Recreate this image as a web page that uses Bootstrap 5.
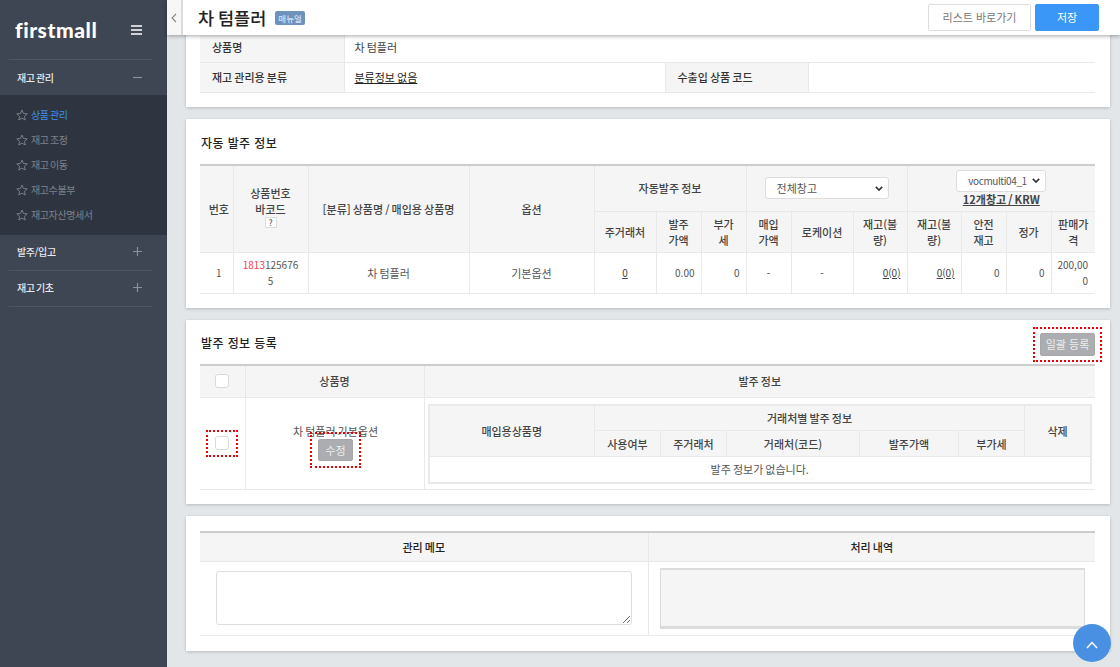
<!doctype html>
<html lang="ko">
<head>
<meta charset="utf-8">
<title>차 텀플러</title>
<link href="https://cdn.jsdelivr.net/npm/bootstrap@5.3.0/dist/css/bootstrap.min.css" rel="stylesheet">
<style>
html,body{height:100%;overflow:hidden}
body{font-family:"Noto Sans CJK KR","Noto Sans",sans-serif;font-size:11px;color:#555;background:#e3e6e9;line-height:16px;word-spacing:-1px}
.shell{height:667px}
.side{width:167px;flex:none;background:#3e4553;color:#e6e8ec;font-size:10px;letter-spacing:-.4px}
.logo-row{height:60px;margin:0 15px 0 9px;padding:0 10px 0 6px;border-bottom:1px solid #4c5361}
.logo-txt{font-family:Lato,"Open Sans",sans-serif;font-weight:900;font-size:21px;color:#fff;letter-spacing:.55px;word-spacing:0}
.menu-h{height:36px;margin:0 15px 0 9px;padding:0 10px 2px 8px;font-weight:500;color:#e8eaee;border-bottom:1px solid #4c5361}
.menu-first{height:35px;border-bottom:0;padding-bottom:0}
.menu-sub{background:#2f3540;padding:7px 0 8px 16px;height:140px}
.menu-link{height:25px;gap:3px;color:#7d828c;text-decoration:none}
.menu-link.on{color:#3d8fe6}
.main-col{min-width:0;position:relative}
.topbar{height:35px;background:#fff;box-shadow:0 1px 4px rgba(0,0,0,.35);position:relative;z-index:5}
.fold{width:16px;background:#f7f7f7;border-right:2px solid #dcdcdc;color:#888}
.head-in{padding:0 21px 0 15px}
.page-ttl{font-size:17.500px;font-weight:500;color:#222;line-height:26px;margin:0}
.man-tag{background:#6f92bd;color:#cfe0f5;font-size:8.500px;line-height:14px;border-radius:2px;padding:0 3px;margin-left:9px;font-weight:500}
.btn-list{height:27px;width:103px;padding:0;font-size:11px;color:#777;background:#fff;border:1px solid #ddd;border-radius:2px}
.btn-save{height:27px;width:64px;padding:0;font-size:11px;color:#fff;background:#3b97f7;border:1px solid #3b97f7;border-radius:2px;margin-left:4px}
.scroller{padding:0 10px 0 19px;margin-top:-13px}
.pane{border:0;border-radius:0;background:#fff;box-shadow:0 1px 3px rgba(0,0,0,.2);margin-bottom:12px;padding:0 15px 0 14px}
.pane-a{height:85px;padding-top:10px}
.pane-b{height:189px;padding-top:15px}
.pane-c{height:184px;padding-top:13px}
.pane-d{height:135px;padding-top:15px;margin-bottom:0}
.sec-ttl{font-size:12px;font-weight:500;color:#222;line-height:18px;margin:0;letter-spacing:.4px;padding-left:1px;word-spacing:0}
.sec-b{height:30px;margin-bottom:0}
.sec-c{height:31px}
.sec-c .sec-ttl{margin-top:1px}
.grid{table-layout:fixed;width:100%;margin:0;border-collapse:collapse;--bs-table-bg:transparent;--bs-table-color:#555}
.grid th,.grid td{border:1px solid #e9e9e9;padding:3px 6px;vertical-align:middle;text-align:center;font-size:11px;line-height:16px;word-break:break-all;box-shadow:none}
.grid th{background:#f5f5f5;color:#444;font-weight:500}
.grid tr>:first-child{border-left:0}
.grid tr>:last-child{border-right:0}
.grid thead tr:first-child>*{border-top:2px solid #ccc}
.grid .num-txt{font-size:10px}
.grid .num-cell{padding-left:8px;padding-right:3px}
.grid .last-cell{padding-left:2px;padding-right:7px}
.info th{text-align:left;padding-left:12px;color:#333}
.info td{text-align:left;padding-left:10px;color:#444}
.info tr{height:30px}
.info,.info tr>*{border-top:0}
.info td u{color:#222}
.info col:nth-child(1){width:144px}.info col:nth-child(2){width:321px}.info col:nth-child(3){width:143px}
.c1{width:33px}.c2{width:75px}.c3{width:161px}.c4{width:125px}.c5{width:62px}.c6{width:45px}.c9{width:54px}
.r1{height:46px}.r2{height:41px}.r3{height:41px}
.help{display:inline-block;width:12px;height:11px;border:1px solid #ddd;font-size:8.500px;line-height:9px;color:#555;background:#fff;font-weight:500;vertical-align:top}
.lnk{color:#444;text-decoration:underline}
.ta-r{text-align:right!important}
.red-num{color:#f0384c}
.pick{font-size:11px;line-height:16px;padding:2px 16px 2px 11px;border-radius:3px;border-color:#ddd;color:#555;background-image:url("data:image/svg+xml,%3csvg xmlns='http://www.w3.org/2000/svg' viewBox='0 0 10 6'%3e%3cpath fill='none' stroke='%23333' stroke-width='2' d='M1 1l4 4 4-4'/%3e%3c/svg%3e");background-size:8px 5px;background-position:right 5px center;margin:0 auto;min-height:0}
.pick-a{width:124px;height:22px}
.pick-b{width:90px;height:22px;margin-bottom:0;font-size:10px;letter-spacing:-.4px;padding-left:11px;padding-right:12px}
.wh-lnk{font-weight:700;color:#444;text-decoration:underline;display:block;line-height:14px;margin-bottom:1px}
.lead-cell{padding:0!important}
.reg-r1{height:32px}
.reg-r2{height:92px}
.gray-btn{background:#acadb1;color:#eee;border:1px solid #a6a7ab;border-radius:2px;padding:0;font-size:11px;line-height:1}
.gb-all{width:55px;height:23px}
.gb-edit{width:35px;height:22px}
.ck{width:14px;height:14px;margin:0;border:1px solid #d9d9d9;border-radius:2px;background-color:#fff;display:block;float:none}
.ck-head{margin:0 auto}
.mark-ck{display:inline-block;border:2px dotted #e00;padding:4px 7px 5px 7px;vertical-align:top}
.edit-cell{padding:8px 5px 3px 7px!important}
.mark-ed{display:inline-block;border:2px dotted #e00;padding:5px 6px 5px 6px;vertical-align:top;margin-top:-7px;position:relative}
.mark-all{border:2px dotted #e00;padding:4px 5px;margin:-6px -7px 0 0;position:relative}
.inner-wrap{padding:6px 3px 5px 3px!important}
.inner{border:2px solid #e9e9e9}
.inner thead tr:first-child>*{border-top:0}
.inner th{padding:2px 3px}
.i1{width:166px}.i2,.i3{width:66px}.i4{width:133px}.i5{width:99px}.i6{width:66px}
.inner tr{height:26px}
.r-a{width:45px}.r-b{width:179px}.m-a{width:448px}
.memo th{font-size:11px;color:#222;height:29px}
.memo-l{padding:0 16px!important}
.memo-r{padding:6px 10px 6px 11px!important}
.memo-input{display:block;width:100%;height:54px;border:1px solid #ddd;border-radius:3px;background:#fff}
.memo-box{height:61px;background:#f5f5f5;border:1px solid #dcdcdc;border-top-width:2px;border-bottom-width:3px}
.memo-row{height:74px}
.go-top{position:absolute;right:9px;bottom:5px;width:38px;height:38px;border-radius:50%;background:#4a90e2;border:0;padding:0;z-index:6}
</style>
</head>
<body>
<div class="d-flex shell">
  <aside class="side d-flex flex-column">
    <div class="logo-row d-flex align-items-center justify-content-between">
      <span class="logo-txt">firstmall</span>
      <svg width="11" height="10" viewBox="0 0 11 10"><path d="M0 1h11M0 5h11M0 9h11" stroke="#fff" stroke-width="1.6"/></svg>
    </div>
    <div class="menu-h menu-first d-flex align-items-center justify-content-between">
      <span>재고 관리</span>
      <svg width="9" height="9" viewBox="0 0 9 9"><path d="M0 4.5h9" stroke="#8a8f99" stroke-width="1.2"/></svg>
    </div>
    <nav class="menu-sub d-flex flex-column">
      <a class="menu-link on d-flex align-items-center" href="#"><svg width="12" height="12" viewBox="0 0 24 24"><path d="M12 2l3 7 7.500.7-5.700 5 1.700 7.300L12 18.200 5.500 22l1.700-7.300-5.700-5L9 9z" fill="none" stroke="#80858f" stroke-width="1.800"/></svg>상품 관리</a>
      <a class="menu-link d-flex align-items-center" href="#"><svg width="12" height="12" viewBox="0 0 24 24"><path d="M12 2l3 7 7.500.7-5.700 5 1.700 7.300L12 18.200 5.500 22l1.700-7.300-5.700-5L9 9z" fill="none" stroke="#80858f" stroke-width="1.800"/></svg>재고 조정</a>
      <a class="menu-link d-flex align-items-center" href="#"><svg width="12" height="12" viewBox="0 0 24 24"><path d="M12 2l3 7 7.500.7-5.700 5 1.700 7.300L12 18.200 5.500 22l1.700-7.300-5.700-5L9 9z" fill="none" stroke="#80858f" stroke-width="1.800"/></svg>재고 이동</a>
      <a class="menu-link d-flex align-items-center" href="#"><svg width="12" height="12" viewBox="0 0 24 24"><path d="M12 2l3 7 7.500.7-5.700 5 1.700 7.300L12 18.200 5.500 22l1.700-7.300-5.700-5L9 9z" fill="none" stroke="#80858f" stroke-width="1.800"/></svg>재고수불부</a>
      <a class="menu-link d-flex align-items-center" href="#"><svg width="12" height="12" viewBox="0 0 24 24"><path d="M12 2l3 7 7.500.7-5.700 5 1.700 7.300L12 18.200 5.500 22l1.700-7.300-5.700-5L9 9z" fill="none" stroke="#80858f" stroke-width="1.800"/></svg>재고자산명세서</a>
    </nav>
    <div class="menu-h d-flex align-items-center justify-content-between">
      <span>발주/입고</span>
      <svg width="9" height="9" viewBox="0 0 9 9"><path d="M0 4.500h9M4.500 0v9" stroke="#8a8f99" stroke-width="1.200"/></svg>
    </div>
    <div class="menu-h d-flex align-items-center justify-content-between">
      <span>재고 기초</span>
      <svg width="9" height="9" viewBox="0 0 9 9"><path d="M0 4.500h9M4.500 0v9" stroke="#8a8f99" stroke-width="1.200"/></svg>
    </div>
  </aside>

  <div class="main-col flex-grow-1 d-flex flex-column">
    <header class="topbar d-flex">
      <div class="fold d-flex align-items-center justify-content-center">
        <svg width="6" height="10" viewBox="0 0 6 10"><path d="M5 1L1 5l4 4" fill="none" stroke="#888" stroke-width="1.100"/></svg>
      </div>
      <div class="head-in flex-grow-1 d-flex align-items-center justify-content-between">
        <div class="d-flex align-items-center">
          <h1 class="page-ttl">차 텀플러</h1>
          <span class="man-tag">매뉴얼</span>
        </div>
        <div class="d-flex">
          <button class="btn btn-list" type="button">리스트 바로가기</button>
          <button class="btn btn-save" type="button">저장</button>
        </div>
      </div>
    </header>

    <div class="scroller">
      <section class="card pane pane-a">
        <table class="table grid info">
          <colgroup><col><col><col><col></colgroup>
          <tbody>
            <tr><th>상품명</th><td colspan="3">차 텀플러</td></tr>
            <tr><th>재고 관리용 분류</th><td><u>분류정보 없음</u></td><th>수출입 상품 코드</th><td></td></tr>
          </tbody>
        </table>
      </section>

      <section class="card pane pane-b">
        <h2 class="sec-ttl sec-b">자동 발주 정보</h2>
        <table class="table grid">
          <colgroup>
            <col class="c1"><col class="c2"><col class="c3"><col class="c4"><col class="c5"><col class="c6"><col class="c6"><col class="c6"><col class="c5"><col class="c9"><col class="c9"><col class="c6"><col class="c6"><col>
          </colgroup>
          <thead>
            <tr class="r1">
              <th class="num-cell" rowspan="2">번호</th>
              <th rowspan="2">상품번호<br>바코드<br><span class="help">?</span></th>
              <th rowspan="2">[분류] 상품명 / 매입용 상품명</th>
              <th rowspan="2">옵션</th>
              <th colspan="3">자동발주 정보</th>
              <th colspan="3"><select class="form-select pick pick-a" aria-label="창고"><option>전체창고</option></select></th>
              <th colspan="4"><select class="form-select pick pick-b" aria-label="계정"><option>vocmulti04_1</option></select><a class="wh-lnk" href="#">12개창고 / KRW</a></th>
            </tr>
            <tr class="r2">
              <th>주거래처</th><th>발주<br>가액</th><th>부가<br>세</th><th>매입<br>가액</th><th>로케이션</th><th>재고(불<br>량)</th><th>재고(불<br>량)</th><th>안전<br>재고</th><th>정가</th><th>판매가<br>격</th>
            </tr>
          </thead>
          <tbody>
            <tr class="r3">
              <td class="num-cell num-txt">1</td>
              <td class="num-txt"><span class="red-num">1813</span>125676<br>5</td>
              <td>차 텀플러</td>
              <td>기본옵션</td>
              <td class="num-txt"><a class="lnk" href="#">0</a></td>
              <td class="ta-r num-txt">0.00</td>
              <td class="ta-r num-txt">0</td>
              <td>-</td>
              <td>-</td>
              <td class="ta-r num-txt"><a class="lnk" href="#">0(0)</a></td>
              <td class="ta-r num-txt"><a class="lnk" href="#">0(0)</a></td>
              <td class="ta-r num-txt">0</td>
              <td class="ta-r num-txt">0</td>
              <td class="ta-r num-txt last-cell">200,00<br>0</td>
            </tr>
          </tbody>
        </table>
      </section>

      <section class="card pane pane-c">
        <div class="sec-c d-flex justify-content-between align-items-start">
          <h2 class="sec-ttl">발주 정보 등록</h2>
          <div class="mark-all"><button class="gray-btn gb-all d-block" type="button">일괄 등록</button></div>
        </div>
        <table class="table grid">
          <colgroup><col class="r-a"><col class="r-b"><col></colgroup>
          <thead>
            <tr class="reg-r1">
              <th><input class="form-check-input ck ck-head" type="checkbox" aria-label="전체 선택"></th>
              <th>상품명</th>
              <th>발주 정보</th>
            </tr>
          </thead>
          <tbody>
            <tr class="reg-r2">
              <td class="lead-cell"><span class="mark-ck"><input class="form-check-input ck" type="checkbox" aria-label="선택"></span></td>
              <td class="edit-cell">차 텀플러 기본옵션<br><span class="mark-ed"><button class="gray-btn gb-edit d-block" type="button">수정</button></span></td>
              <td class="inner-wrap">
                <table class="table grid inner">
                  <colgroup><col class="i1"><col class="i2"><col class="i3"><col class="i4"><col class="i5"><col class="i6"><col></colgroup>
                  <thead>
                    <tr><th rowspan="2">매입용상품명</th><th colspan="5">거래처별 발주 정보</th><th rowspan="2">삭제</th></tr>
                    <tr><th>사용여부</th><th>주거래처</th><th>거래처(코드)</th><th>발주가액</th><th>부가세</th></tr>
                  </thead>
                  <tbody><tr><td colspan="7">발주 정보가 없습니다.</td></tr></tbody>
                </table>
              </td>
            </tr>
          </tbody>
        </table>
      </section>

      <section class="card pane pane-d">
        <table class="table grid memo">
          <colgroup><col class="m-a"><col></colgroup>
          <thead><tr><th>관리 메모</th><th>처리 내역</th></tr></thead>
          <tbody>
            <tr class="memo-row">
              <td class="memo-l"><textarea class="memo-input" aria-label="관리 메모"></textarea></td>
              <td class="memo-r"><div class="memo-box"></div></td>
            </tr>
          </tbody>
        </table>
      </section>
    </div>

    <button class="go-top" type="button" aria-label="맨 위로">
      <svg width="12" height="8" viewBox="0 0 12 8"><path d="M1 7l5-5.500L11 7" fill="none" stroke="#fff" stroke-width="1.500"/></svg>
    </button>
  </div>
</div>
<script src="https://cdn.jsdelivr.net/npm/bootstrap@5.3.0/dist/js/bootstrap.bundle.min.js"></script>
</body>
</html>
